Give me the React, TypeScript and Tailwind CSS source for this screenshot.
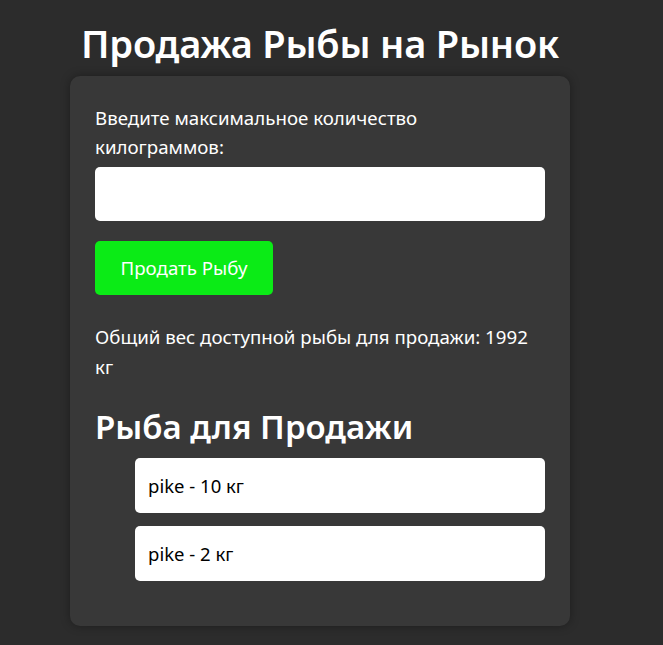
export default function App() {
  const fish = [
    { name: "pike", kg: 10 },
    { name: "pike", kg: 2 },
  ];

  return (
    <div
      className="min-h-screen bg-[#2c2c2c] text-white"
      style={{ fontFamily: '"Noto Sans", "Open Sans", sans-serif' }}
    >
      <div className="w-[640px] flex flex-col items-center pt-[19px] pb-[19px]">
        <h1 className="text-[38px] font-semibold leading-[48px] m-0 tracking-[-0.2px]">
          Продажа Рыбы на Рынок
        </h1>

        {/* Card */}
        <div className="mt-[9px] w-[500px] bg-[#383838] rounded-[10px] shadow-[0_0_10px_rgba(0,0,0,0.35)] px-[25px] pt-[27px] pb-[45px]">
          <label className="block text-[18.7px] leading-[29px]">
            Введите максимальное количество
            <br />
            килограммов:
          </label>
          <input
            type="number"
            className="mt-[6px] block w-full h-[54px] bg-white rounded-[5px] text-black px-3 outline-none"
          />
          <button className="mt-5 h-[54px] w-[178px] bg-[#0beb16] rounded-[5px] text-[18.7px] text-white">
            Продать Рыбу
          </button>

          <p className="mt-[27px] text-[18.7px] leading-[30px]">
            Общий вес доступной рыбы для продажи: 1992 кг
          </p>

          <h2 className="mt-[25px] text-[33px] font-semibold leading-[40px]">Рыба для Продажи</h2>

          <ul className="mt-[11px] pl-10 flex flex-col gap-[13px]">
            {fish.map((f, i) => (
              <li
                key={i}
                className="h-[55px] bg-white rounded-[5px] text-black text-[18.5px] flex items-center px-[13px]"
              >
                {f.name} - {f.kg} кг
              </li>
            ))}
          </ul>
        </div>
      </div>
    </div>
  );
}
